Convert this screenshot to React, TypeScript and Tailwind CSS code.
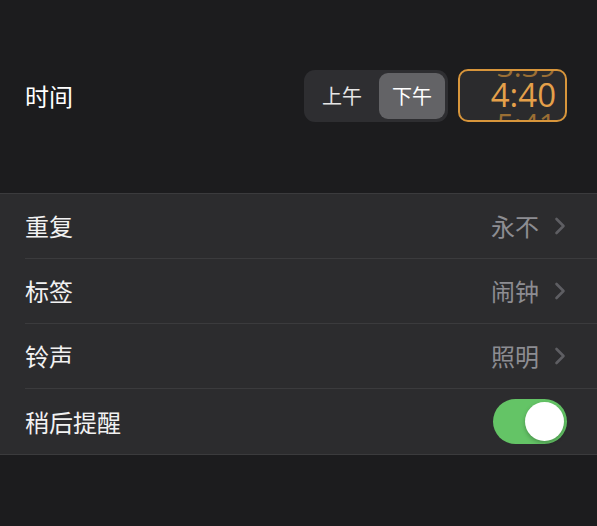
import React from "react";

const Chevron = () => (
  <svg width="12" height="18" viewBox="0 0 12 18" className="ml-[15px]">
    <path d="M2.5 2 L9.5 9 L2.5 16" fill="none" stroke="#5e5e62" strokeWidth="2.6" strokeLinecap="round" strokeLinejoin="round" />
  </svg>
);

function Row({ label, value, last, toggle }: { label: string; value?: string; last?: boolean; toggle?: boolean }) {
  return (
    <div className="flex h-[65px] pl-[25px]">
      <div className={`flex flex-1 items-center justify-between pr-[31px] ${last ? "" : "border-b border-[#3b3b3d]"}`}>
        <span className="text-[24px] text-[#f2f2f2]">{label}</span>
        {toggle ? (
          <div className="relative -mr-[1px] h-[45px] w-[74px] rounded-full bg-[#64c466]">
            <div className="absolute right-[3px] top-[3px] h-[39px] w-[39px] rounded-full bg-white shadow-[0_2px_4px_rgba(0,0,0,0.25)]" />
          </div>
        ) : (
          <div className="flex items-center">
            <span className="text-[24px] text-[#8d8d92]">{value}</span>
            <Chevron />
          </div>
        )}
      </div>
    </div>
  );
}

export default function App() {
  return (
    <div
      className="h-[526px] w-[597px] bg-[#1c1c1e]"
      style={{ fontFamily: '"Noto Sans CJK SC", "Noto Sans", sans-serif' }}
    >
      <div className="flex h-[193px] items-center pb-[2px] pl-[25px] pr-[30px]">
        <span className="flex-1 text-[24px] text-white">时间</span>
        <div className="flex h-[52px] w-[144px] items-center rounded-[11px] bg-[#2e2e31] p-[3px]">
          <div className="flex flex-1 items-center justify-center pr-[2px] text-[20px] text-[#e6e6e6]">上午</div>
          <div className="flex h-[46px] w-[66px] items-center justify-center rounded-[9px] bg-[#636366] text-[20px] text-white">下午</div>
        </div>
        <div className="relative ml-[10px] h-[53px] w-[109px] overflow-hidden rounded-[10px] border-2 border-[#d7953b] bg-[#2b2b2d]">
          <div
            className="absolute right-[9px] top-[-23px] text-[30px] leading-[36px] text-[#9a6e34]"
            style={{ fontFamily: '"Open Sans", sans-serif' }}
          >
            3:39
          </div>
          <div
            className="absolute right-[9px] top-[5px] text-[33px] leading-[38px] text-[#e5a04a]"
            style={{ fontFamily: '"Open Sans", sans-serif' }}
          >
            4:40
          </div>
          <div
            className="absolute right-[9px] top-[35px] text-[30px] leading-[36px] text-[#9a6e34]"
            style={{ fontFamily: '"Open Sans", sans-serif' }}
          >
            5:41
          </div>
        </div>
      </div>
      <div className="border-y border-[#3b3b3d] bg-[#2c2c2e]">
        <Row label="重复" value="永不" />
        <Row label="标签" value="闹钟" />
        <Row label="铃声" value="照明" />
        <Row label="稍后提醒" toggle last />
      </div>
    </div>
  );
}
